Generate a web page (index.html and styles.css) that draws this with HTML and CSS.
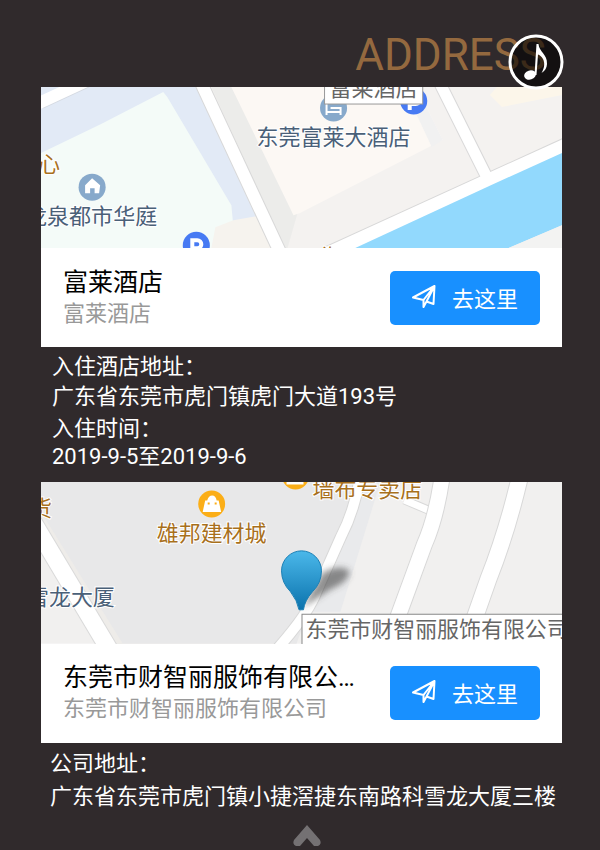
FILE: index.html
```html
<!DOCTYPE html>
<html lang="zh-CN">
<head>
    <meta charset="UTF-8">
    <meta name="viewport" content="width=device-width, initial-scale=1.0">
    <title>ADDRESS</title>
    <link rel="stylesheet" href="styles.css">
</head>
<body>

<header class="header">
    <h1 class="title">ADDRESS</h1>
    <button class="music-button" type="button" aria-label="音乐">
        <svg viewBox="0 0 56 56" aria-hidden="true">
            <circle cx="28" cy="28" r="26" fill="#000" fill-opacity="0.6" stroke="#fff" stroke-width="3"/>
            <ellipse cx="22" cy="41" rx="6" ry="4.600" fill="#fff" transform="rotate(-18 22 41)"/>
            <path d="M26.500 41L28.500 10H30.500C31 18 39.500 20 39 30C38.800 34 37 37 33.500 39C36.500 34 37 29 35 25C33.500 22.500 31.500 21 30 20.500L28.500 41Z" fill="#fff"/>
        </svg>
    </button>
</header>

<main class="content">
    <section class="card">
        <svg class="map" viewBox="0 0 520 161" role="img" aria-label="富莱酒店">
            <rect width="520" height="161" fill="#f4f2f0"/>
            <!-- blocks on the left -->
            <path d="M0 0H160L232 161H0Z" fill="#e2eaf6"/>
            <path d="M0 66L60 37L122 5L126 10L190 118L194 161H0Z" fill="#f4fbf8"/>
            <path d="M192 133L215 129L230 161H170L174 140Z" fill="#f6f3ee"/>
            <path d="M0 16L54 -9" stroke="#d5dae2" stroke-width="12"/>
            <path d="M-4 17L54 -10" stroke="#fff" stroke-width="12"/>
            <!-- blocks in the middle -->
            <path d="M170 0H190L256 126L246 161H243Z" fill="#ececea"/>
            <path d="M190 0H375L401 53L258 126L252 128Z" fill="#fcf8f4"/>
            <path d="M375 0L401 53L390 60L362 0Z" fill="#f1f1f1"/>
            <path d="M455 0H520V8L460 20L448 8Z" fill="#fcf6ea"/>
            <!-- roads -->
            <path d="M158 -8L240 168" stroke="#d8d8d8" stroke-width="14"/>
            <path d="M158 -8L240 168" stroke="#fff" stroke-width="12"/>
            <path d="M394 -12L448 96" stroke="#d8d8d8" stroke-width="13"/>
            <path d="M280 170L530 56" stroke="#d8d8d8" stroke-width="17"/>
            <path d="M394 -12L448 96" stroke="#fff" stroke-width="11"/>
            <path d="M280 170L530 56" stroke="#fff" stroke-width="15"/>
            <path d="M313 161L449 98L520 66V138L466 161Z" fill="#92d9fd"/>
            <path d="M466 161L520 138V161Z" fill="#f3f3f2"/>
            <!-- places -->
            <g class="place">
                <text class="place-gold" x="-3" y="85">心</text>
                <text class="place-blue" x="-16" y="137">龙泉都市华庭</text>
                <text class="place-blue" x="215" y="58">东莞富莱大酒店</text>
                <text class="place-gold" x="278" y="178">街</text>
            </g>
            <circle cx="51" cy="100" r="13.500" fill="#87a9cb"/>
            <path d="M51 91L59 98L58 106H53.500V101H49V106H44V98Z" fill="#fff"/>
            <circle cx="155" cy="158" r="13.500" fill="#477af3"/>
            <path d="M151 169V153H156A4 4 0 0 1 156 161H151" fill="none" stroke="#fff" stroke-width="4"/>
            <circle cx="292" cy="21" r="13.500" fill="#87a9cb"/>
            <path d="M285 14V28M285 25H299M299 28V21H289" fill="none" stroke="#fff" stroke-width="2"/>
            <circle cx="372" cy="14" r="13.500" fill="#477af3"/>
            <path d="M368 23V9H374A4 4 0 0 1 374 17H368" fill="none" stroke="#fff" stroke-width="4"/>
            <rect x="283" y="-12" width="98" height="29" fill="#fff" stroke="#999"/>
            <text class="place-tip" x="288" y="9">富莱酒店</text>
        </svg>
        <div class="card-bar">
            <div class="card-text">
                <h2 class="card-name">富莱酒店</h2>
                <p class="card-sub">富莱酒店</p>
            </div>
            <button class="go-button" type="button">
                <svg class="go-icon" viewBox="0 0 24 24" aria-hidden="true">
                    <path d="M1 12.500L22.500 1L21.500 19L14.500 16.500L11.500 22V15L1 12.500ZM11.500 15L22.500 1L14.500 16.500"/>
                </svg>
                去这里
            </button>
        </div>
    </section>

    <div class="info">
        <p>入住酒店地址：</p>
        <p>广东省东莞市虎门镇虎门大道193号</p>
    </div>
    <div class="info info-time">
        <p>入住时间：</p>
        <p>2019-9-5至2019-9-6</p>
    </div>

    <section class="card">
        <svg class="map" viewBox="0 0 522 162" role="img" aria-label="东莞市财智丽服饰有限公司">
            <defs>
                <linearGradient id="pin" x1="0" y1="0" x2="0" y2="1">
                    <stop offset="0" stop-color="#4bb8ea"/>
                    <stop offset="1" stop-color="#0b73ad"/>
                </linearGradient>
                <filter id="soft" x="-50%" y="-50%" width="200%" height="200%">
                    <feGaussianBlur stdDeviation="3"/>
                </filter>
            </defs>
            <rect width="522" height="162" fill="#f1f0ef"/>
            <path d="M0 0H316L256 162H70L0 36Z" fill="#e8e8e9"/>
            <path d="M316 0H340L300 130H270Z" fill="#e9eaec"/>
            <path d="M0 30L82 162H68L0 48Z" fill="#eeece9"/>
            <!-- roads -->
            <path d="M-8 40L72 174" stroke="#dadada" stroke-width="19"/>
            <path d="M-8 40L72 174" stroke="#fff" stroke-width="17"/>
            <path d="M320 -10Q316 25 300 56L276 110Q268 132 236 168" fill="none" stroke="#d8d8d8" stroke-width="12"/>
            <path d="M364 18L390 29" stroke="#d8d8d8" stroke-width="9"/>
            <path d="M364 18L390 29" stroke="#fff" stroke-width="7"/>
            <path d="M320 -10Q316 25 300 56L276 110Q268 132 236 168" fill="none" stroke="#fff" stroke-width="10"/>
            <path d="M402 -6Q396 36 384 63L358 134L348 166" fill="none" stroke="#d8d8d8" stroke-width="17"/>
            <path d="M402 -6Q396 36 384 63L358 134L348 166" fill="none" stroke="#fff" stroke-width="15"/>
            <path d="M480 -6Q467 50 448 98L424 166" fill="none" stroke="#d8d8d8" stroke-width="18"/>
            <path d="M480 -6Q467 50 448 98L424 166" fill="none" stroke="#fff" stroke-width="16"/>
            <!-- places -->
            <g class="place">
                <text class="place-gold" x="-11" y="34">货</text>
                <text class="place-gold" x="116" y="59">雄邦建材城</text>
                <text class="place-gold" x="272" y="15">墙布专卖店</text>
                <text class="place-blue" x="-14" y="123">雪龙大厦</text>
            </g>
            <circle cx="171" cy="22" r="13.500" fill="#fbae17"/>
            <path d="M162 30L164.500 18.500H166.500Q168 13.500 171.500 13.500Q175 13.500 176 18.500H178L180.500 30Z" fill="#fff"/>
            <path d="M167 21.500H169M174 21.500H176" stroke="#fbae17" stroke-width="2"/>
            <circle cx="255" cy="-6" r="13.500" fill="#fbae17"/>
            <path d="M246 1H263" stroke="#fff" stroke-width="3"/>
            <path d="M262 126L282 91Q300 82 309 89Q309 100 291 107Z" fill="#444" fill-opacity="0.6" filter="url(#soft)"/>
            <rect x="261.500" y="132.500" width="270" height="50" fill="#fff" stroke="#888"/>
            <text class="place-tip" x="265" y="155">东莞市财智丽服饰有限公司</text>
            <path d="M258.500 128Q257 119 250 110Q241 101 241 89A20 20 0 0 1 281 89Q281 101 272 110Q264 119 263 128Z" fill="url(#pin)" stroke="#1b7fb5"/>
        </svg>
        <div class="card-bar">
            <div class="card-text">
                <h2 class="card-name">东莞市财智丽服饰有限公司</h2>
                <p class="card-sub">东莞市财智丽服饰有限公司</p>
            </div>
            <button class="go-button" type="button">
                <svg class="go-icon" viewBox="0 0 24 24" aria-hidden="true">
                    <path d="M1 12.500L22.500 1L21.500 19L14.500 16.500L11.500 22V15L1 12.500ZM11.500 15L22.500 1L14.500 16.500"/>
                </svg>
                去这里
            </button>
        </div>
    </section>

    <div class="info info-company">
        <p>公司地址：</p>
        <p>广东省东莞市虎门镇小捷滘捷东南路科雪龙大厦三楼</p>
    </div>
</main>

<footer class="footer">
    <svg class="arrow-up" viewBox="0 0 30 24" aria-hidden="true">
        <path d="M15 2L28 17Q30 21 26 23H22L15 15L8 23H4Q0 21 2 17Z" fill="#747173"/>
    </svg>
</footer>

</body>
</html>
```
FILE: styles.css
```css
* {
    box-sizing: border-box;
}
body {
    font-family: Roboto, "Noto Sans CJK SC", sans-serif;
    background-color: #302a2c;
    margin: 0;
    color: #fff;
    font-size: 22px;
}
h1, h2, p {
    margin: 0;
    font-weight: 400;
}
button {
    font-family: inherit;
    border: none;
    cursor: pointer;
}
.header {
    position: relative;
    display: flex;
    justify-content: flex-end;
    height: 87px;
    padding: 29px 54px 0 0;
}
.title {
    font-size: 44px;
    line-height: 52px;
    color: #94693f;
}
/* sits over the end of the title */
.music-button {
    position: absolute;
    top: 34px;
    right: 36px;
    width: 56px;
    height: 56px;
    padding: 0;
    background: none;
}
.music-button svg {
    display: block;
}
.content {
    padding: 0 38px 0 41px;
}
.card {
    background-color: #fff;
}
.map {
    display: block;
    width: 100%;
    overflow: hidden;
}
.place text {
    font-size: 22px;
    paint-order: stroke;
    stroke: #fff;
    stroke-width: 2px;
}
.place .place-gold {
    fill: #a8701c;
}
.place .place-blue {
    fill: #4a6078;
}
.place-tip {
    font-size: 22px;
    fill: #666;
}
.card-bar {
    display: flex;
    align-items: center;
    justify-content: space-between;
    gap: 30px;
    height: 99px;
    padding: 0 22px;
}
.card-text {
    flex: 1;
    min-width: 0;
}
.card-name {
    font-size: 25px;
    line-height: 32px;
    color: #000;
    overflow: hidden;
    text-overflow: ellipsis;
    white-space: nowrap;
}
.card-sub {
    line-height: 30px;
    color: #999;
}
.go-button {
    display: flex;
    align-items: center;
    justify-content: center;
    gap: 16px;
    width: 150px;
    height: 54px;
    padding: 0 0 2px;
    border-radius: 5px;
    background-color: #1890ff;
    color: #fff;
    font-size: 22px;
}
.go-icon {
    width: 24px;
    height: 24px;
    fill: none;
    stroke: #fff;
    stroke-width: 2px;
    stroke-linejoin: round;
}
.info {
    padding: 5px 0 0 11px;
    line-height: 30px;
}
.info-time {
    padding: 3px 0 11px 11px;
    line-height: 28px;
}
.info-company {
    padding: 4px 0 10px 9px;
    line-height: 33px;
}
.footer {
    display: flex;
    justify-content: center;
    padding-left: 14px;
}
.arrow-up {
    width: 30px;
    height: 24px;
}
```
